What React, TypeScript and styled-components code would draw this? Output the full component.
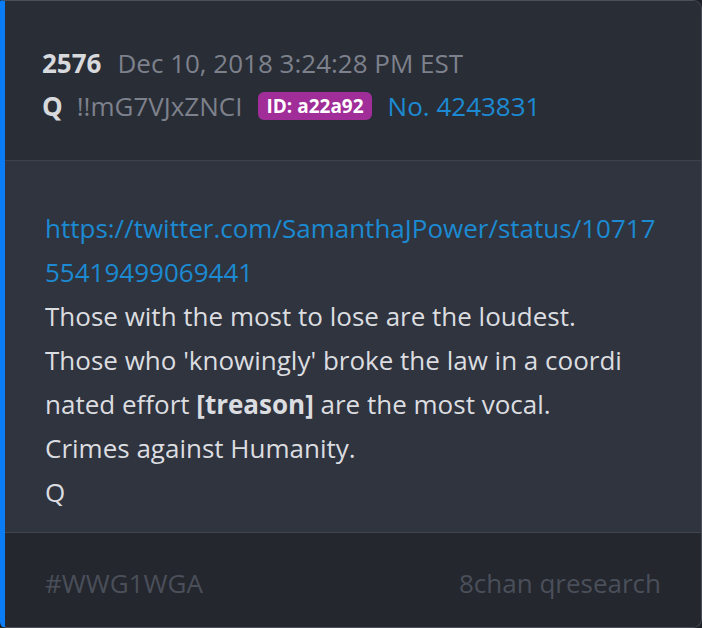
import React from "react";
import styled, { createGlobalStyle } from "styled-components";

const Global = createGlobalStyle`
  html, body { margin: 0; padding: 0; background: #1f2228; }
  body { font-family: "Open Sans", "Noto Sans", sans-serif; }
`;

const Card = styled.div`
  width: 702px;
  height: 628px;
  box-sizing: border-box;
  display: flex;
  flex-direction: column;
  border: 1px solid #4a4f59;
  border-left: 5px solid #0a7cf5;
  border-radius: 2px 9px 9px 6px;
  overflow: hidden;
  background: #282c35;
`;

const Header = styled.div`
  padding: 45px 40px 0 37px;
  height: 160px;
  box-sizing: border-box;
  display: flex;
  flex-direction: column;
  gap: 9px;
  border-bottom: 1px solid #3d424c;
  background: #292d36;
`;

const Row = styled.div`
  display: flex;
  align-items: center;
  gap: 16px;
  font-size: 26px;
  line-height: 34px;
`;

const Strong = styled.span<{ $tight?: boolean }>`
  font-weight: 700;
  color: #d8d9dc;
  margin-right: ${(p) => (p.$tight ? "-2px" : "0")};
`;

const Muted = styled.span`
  color: #7d818c;
`;

const Badge = styled.span`
  background: #a02d98;
  color: #ffffff;
  font-weight: 700;
  font-size: 19px;
  line-height: 28px;
  padding: 0 8px;
  border-radius: 6px;
`;

const Link = styled.a`
  color: #1c8ad2;
  text-decoration: none;
`;

const Body = styled.div`
  flex: 1;
  background: #2f343e;
  padding: 45px 40px 0 40px;
  font-size: 26px;
  line-height: 44px;
  color: #dcdde0;
  word-break: break-all;
`;

const Line = styled.div``;

const Bold = styled.b`
  font-weight: 700;
`;

const Footer = styled.div`
  height: 95px;
  box-sizing: border-box;
  border-top: 1px solid #40454f;
  background: #24272e;
  display: flex;
  justify-content: space-between;
  align-items: center;
  padding: 5px 40px 0 40px;
  font-size: 26px;
  color: #4a4f5a;
`;

export default function App() {
  return (
    <>
      <Global />
      <Card>
        <Header>
          <Row>
            <Strong>2576</Strong>
            <Muted>Dec 10, 2018 3:24:28 PM EST</Muted>
          </Row>
          <Row>
            <Strong $tight>Q</Strong>
            <Muted>!!mG7VJxZNCI</Muted>
            <Badge>ID: a22a92</Badge>
            <Link>No. 4243831</Link>
          </Row>
        </Header>
        <Body>
          <Line>
            <Link>https://twitter.com/SamanthaJPower/status/1071755419499069441</Link>
          </Line>
          <Line>Those with the most to lose are the loudest.</Line>
          <Line>Those who 'knowingly' broke the law in a coordi</Line>
          <Line>
            nated effort <Bold>[treason]</Bold> are the most vocal.
          </Line>
          <Line>Crimes against Humanity.</Line>
          <Line>Q</Line>
        </Body>
        <Footer>
          <span>#WWG1WGA</span>
          <span>8chan qresearch</span>
        </Footer>
      </Card>
    </>
  );
}
